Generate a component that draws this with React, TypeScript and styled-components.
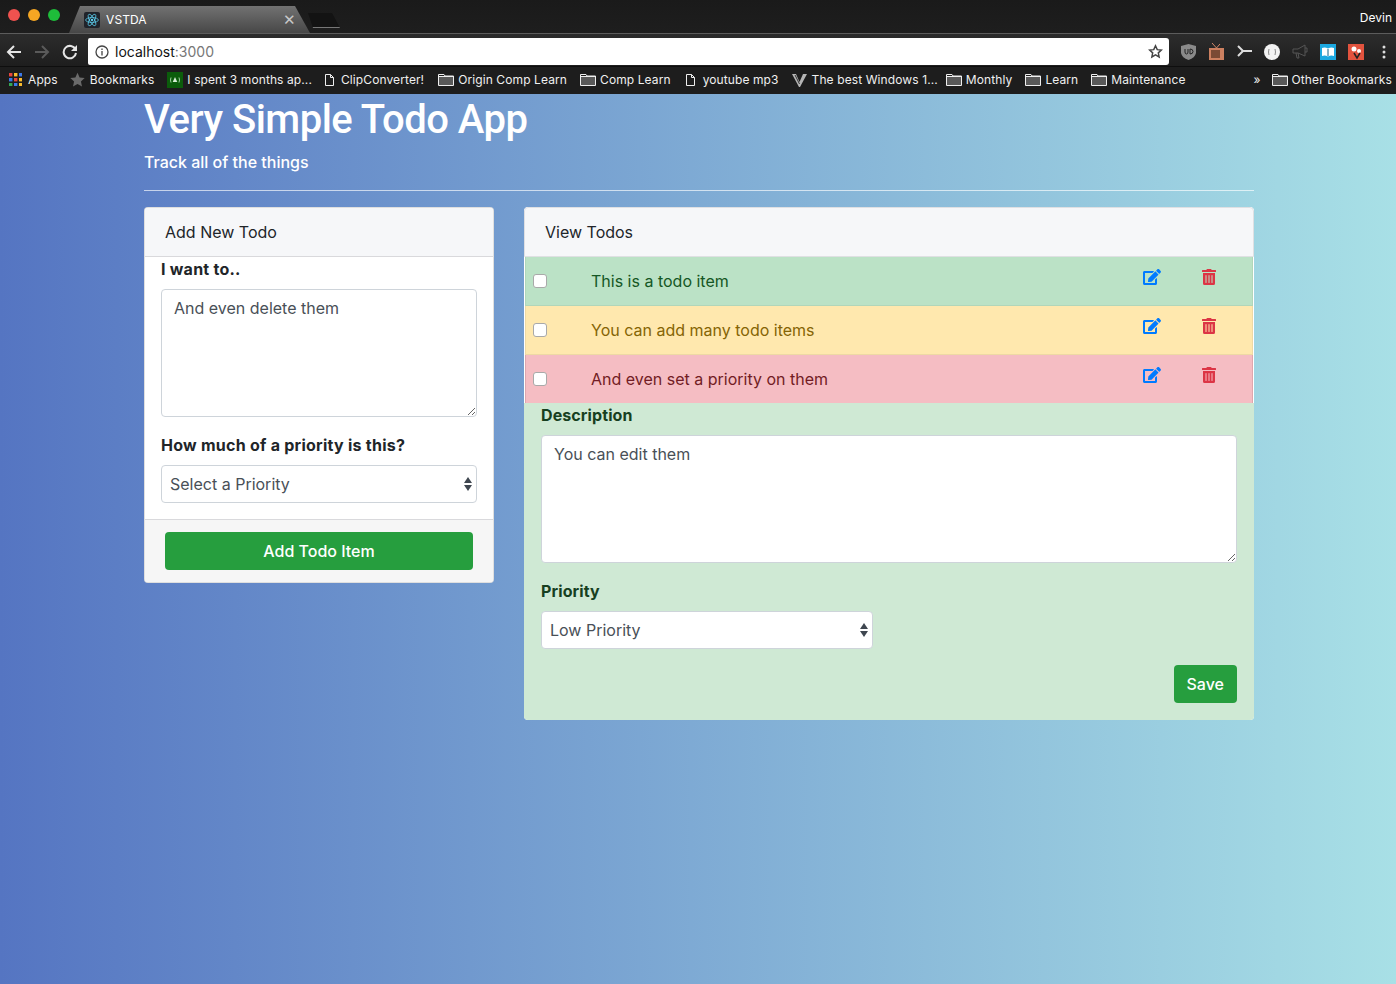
import React from 'react';
import styled, { createGlobalStyle } from 'styled-components';
import { FaEdit, FaTrashAlt } from 'react-icons/fa';

const GlobalStyle = createGlobalStyle`
  html, body {
    margin: 0;
    padding: 0;
  }
  body {
    font-family: Inter, "Open Sans", sans-serif;
    background: #5575c2;
  }
  * {
    box-sizing: border-box;
  }
`;

const Page = styled.div`
  width: 1396px;
  height: 984px;
  overflow: hidden;
  display: flex;
  flex-direction: column;
`;

/* browser chrome */
const Browser = styled.header`
  height: 94px;
  flex: none;
  display: flex;
  flex-direction: column;
  color: #fff;
  background: #1c1c1c;
`;

const TabStrip = styled.div`
  height: 34px;
  flex: none;
  display: flex;
  padding-top: 6px;
  align-items: flex-start;
  background: linear-gradient(#1a1a1a, #1e1e1e);
  border-bottom: 1px solid #5c5c5c;
`;

const Lights = styled.div`
  width: 69px;
  height: 22px;
  padding: 3px 0 0 8px;
  display: flex;
  gap: 8px;
  flex: none;
`;

const Light = styled.span<{ $color: string }>`
  width: 12px;
  height: 12px;
  border-radius: 50%;
  background: ${p => p.$color};
`;

const Tab = styled.div`
  width: 241px;
  height: 27px;
  flex: none;
  display: flex;
  align-items: center;
  padding: 0 14px 0 15px;
  background: linear-gradient(#727272, #474747);
  clip-path: polygon(0 100%, 11px 0, 226px 0, 241px 100%);
  font-size: 12px;
  letter-spacing: 0.1px;
`;

const TabIcon = styled.span`
  width: 16px;
  height: 16px;
  background: #20232a;
  border-radius: 2px;
  margin-right: 6px;
  display: flex;
  align-items: center;
  justify-content: center;
`;

const TabTitle = styled.span`
  flex: 1;
`;

const TabClose = styled.span`
  color: #c8c8c8;
  font-size: 15px;
  line-height: 1;
`;

const NewTab = styled.div`
  width: 32px;
  height: 15px;
  flex: none;
  margin: 7px 0 0 -2px;
  background: #131313;
  clip-path: polygon(0 0, 24px 0, 32px 100%, 5px 100%);
  border-bottom: 1px solid #777;
`;

const UserName = styled.span`
  margin: 4px 4px 0 auto;
  font-size: 12px;
`;

const Toolbar = styled.div`
  height: 32px;
  flex: none;
  display: flex;
  align-items: center;
  background: linear-gradient(#2c2c2c, #1e1e1e);
  padding: 4px 0 1px;
`;

const NavButton = styled.span`
  width: 28px;
  height: 24px;
  flex: none;
  display: flex;
  align-items: center;
  justify-content: center;
`;

const Omnibox = styled.div`
  width: 1081px;
  height: 27px;
  margin: 0 5px 0 4px;
  flex: none;
  background: #fff;
  border-radius: 2px 3px 3px 2px;
  display: flex;
  align-items: center;
  padding: 0 6px 0 7px;
  color: #111;
  font-size: 14px;
`;

const Url = styled.span`
  margin-left: 6px;
  flex: 1;
`;

const Port = styled.span`
  color: #777;
`;

const Extensions = styled.div`
  display: flex;
  align-items: center;
`;

const Extension = styled.span`
  width: 28px;
  height: 20px;
  flex: none;
  display: flex;
  align-items: center;
  justify-content: center;
`;

const BookmarkBar = styled.div`
  height: 28px;
  flex: none;
  padding: 0 0 2px 9px;
  display: flex;
  align-items: center;
  background: #1d1d1d;
  border-top: 1px solid #0e0e0e;
  font-size: 12px;
  white-space: nowrap;
  color: #f0f0f0;
`;

const Bookmark = styled.span<{ $gap?: number; $iconGap?: number }>`
  display: flex;
  align-items: center;
  flex: none;
  gap: ${p => p.$iconGap ?? 4}px;
  margin-left: ${p => p.$gap ?? 0}px;
`;

const BookmarkLabel = styled.span`
  letter-spacing: 0.1px;
`;

/* app */
const Main = styled.main`
  flex: 1;
  background: linear-gradient(90deg, #5575c2 0%, #a8e0e6 100%);
  color: #212529;
`;

const Container = styled.div`
  width: 1140px;
  margin: 0 0 0 129px;
  padding: 0 15px;
`;

const Title = styled.h1`
  margin: 0;
  padding-top: 2px;
  font-family: Roboto, Inter, sans-serif;
  font-size: 40px;
  line-height: 48px;
  font-weight: 500;
  letter-spacing: -0.5px;
  color: #fff;
`;

const Subtitle = styled.p`
  margin: 6px 0 0;
  font-size: 16px;
  line-height: 24px;
  font-weight: 500;
  color: #fff;
`;

const Rule = styled.hr`
  margin: 16px 0;
  height: 1px;
  border: 0;
  background: rgba(255, 255, 255, 0.65);
`;

const Columns = styled.div`
  display: flex;
  gap: 30px;
  align-items: flex-start;
`;

const Card = styled.section`
  width: 350px;
  flex: none;
  background: #fff;
  border: 1px solid rgba(0, 0, 0, 0.125);
  border-radius: 4px;
  overflow: hidden;
`;

const ViewCard = styled(Card)`
  width: 730px;
  border: 0;
`;

const CardHeader = styled.div`
  height: 49px;
  padding: 12px 20px;
  font-size: 16px;
  line-height: 24px;
  background: #f6f7f9;
  border-bottom: 1px solid #d9d9dc;
`;

const ViewHeader = styled(CardHeader)`
  height: 50px;
  border: 1px solid #dfe0e3;
  border-radius: 4px 4px 0 0;
`;

const CardBody = styled.div`
  padding: 0 16px 16px;
`;

const Label = styled.label<{ $top?: number }>`
  display: block;
  margin: ${p => p.$top ?? 0}px 0 8px;
  font-size: 16px;
  line-height: 24px;
  font-weight: 700;
  letter-spacing: 0.25px;
`;

const TextArea = styled.textarea`
  display: block;
  width: 100%;
  height: 128px;
  padding: 6px 12px;
  font: 400 16px/24px Inter, sans-serif;
  color: #495057;
  background: #fff;
  border: 1px solid #ced4da;
  border-radius: 4px;
  outline: none;
`;

const SelectWrap = styled.div<{ $width?: number }>`
  position: relative;
  width: ${p => (p.$width ? `${p.$width}px` : '100%')};

  &:before,
  &:after {
    content: '';
    position: absolute;
    right: 5px;
    border-left: 4px solid transparent;
    border-right: 4px solid transparent;
    pointer-events: none;
  }

  &:before {
    top: 12px;
    border-bottom: 6px solid #3f4650;
  }

  &:after {
    top: 20px;
    border-top: 6px solid #3f4650;
  }
`;

const Select = styled.select`
  display: block;
  width: 100%;
  height: 38px;
  padding: 0 8px;
  appearance: none;
  font: 400 16px Inter, sans-serif;
  color: #495057;
  background: #fff;
  border: 1px solid #ced4da;
  border-radius: 4px;
  outline: none;
`;

const CardFooter = styled.div`
  height: 63px;
  padding: 12px 20px;
  background: #f6f6f6;
  border-top: 1px solid #d9d9dc;
`;

const Button = styled.button<{ $block?: boolean }>`
  display: block;
  width: ${p => (p.$block ? '100%' : 'auto')};
  height: 38px;
  padding: 0 13px;
  font: 500 16px Inter, sans-serif;
  color: #fff;
  background: #269e3e;
  border: 0;
  border-radius: 4px;
`;

const TodoItem = styled.div<{ $bg: string; $color: string; $border: string }>`
  height: 49px;
  margin: 0 1px;
  display: flex;
  align-items: center;
  font-size: 16px;
  color: ${p => p.$color};
  background: ${p => p.$bg};
  border: 1px solid ${p => p.$border};
  border-top: 0;
`;

const Check = styled.input`
  width: 14px;
  height: 14px;
  margin: 0 44px 0 7px;
  flex: none;
  appearance: none;
  background: #fff;
  border: 1px solid #a9a9a9;
  border-radius: 3px;
`;

const TodoText = styled.span`
  flex: 1;
`;

const IconSlot = styled.span<{ $width: number; $color: string }>`
  width: ${p => p.$width}px;
  flex: none;
  display: flex;
  margin-top: -9px;
  color: ${p => p.$color};
`;

const Detail = styled.div`
  height: 317px;
  padding: 0 17px;
  background: #cfe9d4;
  color: #155724;
`;

const DetailLabel = styled(Label)`
  color: #17401f;
  letter-spacing: 0.1px;
`;

const SaveRow = styled.div`
  display: flex;
  justify-content: flex-end;
  margin-top: 16px;
`;

const ReactLogo = () => (
  <svg width="14" height="14" viewBox="-12 -12 24 24" fill="none" stroke="#61dafb" strokeWidth="1.2">
    <circle r="2" fill="#61dafb" stroke="none" />
    <ellipse rx="11" ry="4.2" />
    <ellipse rx="11" ry="4.2" transform="rotate(60)" />
    <ellipse rx="11" ry="4.2" transform="rotate(120)" />
  </svg>
);

const BackArrow = ({ color }: { color: string }) => (
  <svg width="16" height="14" viewBox="0 0 16 14" fill="none" stroke={color} strokeWidth="2">
    <path d="M15 7H2M8 1L2 7l6 6" />
  </svg>
);

const ForwardArrow = ({ color }: { color: string }) => (
  <svg width="16" height="14" viewBox="0 0 16 14" fill="none" stroke={color} strokeWidth="2">
    <path d="M1 7h13M8 1l6 6-6 6" />
  </svg>
);

const Reload = () => (
  <svg width="16" height="16" viewBox="0 0 16 16" fill="none" stroke="#e6e6e6" strokeWidth="2">
    <path d="M13.5 5.5A6.2 6.2 0 1 0 14 9" />
    <path d="M15 1v6H9z" fill="#e6e6e6" stroke="none" />
  </svg>
);

const InfoIcon = () => (
  <svg width="14" height="14" viewBox="0 0 14 14" fill="none" stroke="#444" strokeWidth="1.3">
    <circle cx="7" cy="7" r="6" />
    <path d="M7 6v4.5M7 3.4v1.5" />
  </svg>
);

const StarOutline = () => (
  <svg width="15" height="15" viewBox="0 0 24 24" fill="none" stroke="#444" strokeWidth="2.4">
    <path d="M12 3l2.8 6 6.5.8-4.8 4.4 1.3 6.5L12 17.4l-5.8 3.3 1.3-6.5L2.7 9.8l6.5-.8z" />
  </svg>
);

const AppsGrid = () => {
  const colors = ['#e8453c', '#f9bb2d', '#3b78e7', '#3b78e7', '#e8453c', '#f9bb2d', '#34a853', '#3b78e7', '#f9bb2d'];
  return (
    <svg width="13" height="13" viewBox="0 0 13 13">
      {colors.map((c, i) => (
        <rect key={i} x={(i % 3) * 5} y={Math.floor(i / 3) * 5} width="3.4" height="3.4" fill={c} />
      ))}
    </svg>
  );
};

const GreyStar = () => (
  <svg width="15" height="15" viewBox="0 0 24 24" fill="#6a6a6a">
    <path d="M12 1l3.4 7.6 8.1.9-6 5.5 1.7 8L12 19l-7.200 4 1.700-8-6-5.500 8.100-.9z" />
  </svg>
);

const GreenSite = () => (
  <svg width="16" height="16" viewBox="0 0 16 16">
    <rect width="16" height="16" fill="#0b5c0b" />
    <path d="M4 5.500Q3 8 4 10.500M12 5.500Q13 8 12 10.500" fill="none" stroke="#9fd29f" />
    <path d="M8 5l2.300 5H5.700z" fill="#d5efd5" />
  </svg>
);

const DocIcon = () => (
  <svg width="9" height="12" viewBox="0 0 9 12" fill="none" stroke="#eee">
    <path d="M.5.5h5l3 3v8h-8zM5.500.5v3h3" />
  </svg>
);

const FolderIcon = () => (
  <svg width="16" height="13" viewBox="0 0 16 13" fill="none" stroke="#eee">
    <path d="M1 4h14v8H1z" fill="#8a8a8a" stroke="none" opacity=".55" />
    <path d="M.5 12.500V1.500h5.500l1 1.500h8.500v9.500z" />
    <path d="M.5 3.500h15" />
  </svg>
);

const VIcon = () => (
  <svg width="15" height="14" viewBox="0 0 15 14">
    <path d="M0 1h4l3.500 8L11 1h4L8 14H7z" fill="#b5b5b5" />
    <path d="M3 2l4.500 9" stroke="#333" fill="none" />
  </svg>
);

const folders = (name: string, gap: number) => (
  <Bookmark $gap={gap}>
    <FolderIcon />
    <BookmarkLabel>{name}</BookmarkLabel>
  </Bookmark>
);

const todos = [
  { text: 'This is a todo item', bg: '#bbe2c6', color: '#155724', border: '#b1d6ba' },
  { text: 'You can add many todo items', bg: '#ffe8ae', color: '#856404', border: '#eed9a4' },
  { text: 'And even set a priority on them', bg: '#f5bdc3', color: '#721c24', border: '#dfa7ae' },
];

export default function App() {
  return (
    <Page>
      <GlobalStyle />
      <Browser>
        <TabStrip>
          <Lights>
            <Light $color="#f0524f" />
            <Light $color="#f5a623" />
            <Light $color="#1ebd3a" />
          </Lights>
          <Tab>
            <TabIcon>
              <ReactLogo />
            </TabIcon>
            <TabTitle>VSTDA</TabTitle>
            <TabClose>✕</TabClose>
          </Tab>
          <NewTab />
          <UserName>Devin</UserName>
        </TabStrip>
        <Toolbar>
          <NavButton>
            <BackArrow color="#e6e6e6" />
          </NavButton>
          <NavButton>
            <ForwardArrow color="#5a5a5a" />
          </NavButton>
          <NavButton>
            <Reload />
          </NavButton>
          <Omnibox>
            <InfoIcon />
            <Url>
              localhost<Port>:3000</Port>
            </Url>
            <StarOutline />
          </Omnibox>
          <Extensions>
            <Extension>
              <svg width="15" height="16" viewBox="0 0 15 16">
                <path d="M0 2l7.500-2L15 2v7q-1 5-7.500 7Q1 14 0 9z" fill="#8a8a8a" />
                <path d="M4 5v3q0 2 1.500 2T7 8V5M9 5v5q3 0 3-2.500T9 5z" fill="none" stroke="#222" />
              </svg>
            </Extension>
            <Extension>
              <svg width="15" height="17" viewBox="0 0 15 17">
                <path d="M3 0l4.500 5L11 1" fill="none" stroke="#d5896a" />
                <rect y="5" width="15" height="12" fill="#cc8060" />
                <rect x="2" y="7" width="9" height="8" fill="#7a4a35" />
              </svg>
            </Extension>
            <Extension>
              <svg width="15" height="13" viewBox="0 0 15 13" fill="none" stroke="#ddd" strokeWidth="2">
                <path d="M1 1l5 5H15M6 6l-5 5" />
              </svg>
            </Extension>
            <Extension>
              <svg width="16" height="16" viewBox="0 0 16 16">
                <circle cx="8" cy="8" r="8" fill="#f2f2f2" />
                <path d="M5 5Q4 8 5 11M11 5Q12 8 11 11" stroke="#888" fill="none" />
              </svg>
            </Extension>
            <Extension>
              <svg width="16" height="15" viewBox="0 0 16 15" fill="none" stroke="#555">
                <path d="M1 5h5l7-4v11L6 9H1zM4 9l1 5h2l-1-5M13 4h2v4h-2" />
              </svg>
            </Extension>
            <Extension>
              <svg width="16" height="16" viewBox="0 0 16 16">
                <rect width="16" height="16" fill="#1ba8e0" />
                <path d="M2 4q3-1 6 .5Q11 3 14 4v8q-3-1-6 .5Q5 11 2 12z" fill="#fff" />
                <path d="M8 5v7" stroke="#0b5f85" />
              </svg>
            </Extension>
            <Extension>
              <svg width="16" height="16" viewBox="0 0 16 16">
                <rect width="16" height="16" fill="#e2533e" />
                <circle cx="6" cy="5" r="2.500" fill="#fff" />
                <circle cx="11" cy="7" r="2" fill="#fff" />
                <path d="M6 9l3 5 3-5" stroke="#222" fill="none" strokeWidth="1.500" />
              </svg>
            </Extension>
            <Extension>
              <svg width="4" height="14" viewBox="0 0 4 14" fill="#ddd">
                <circle cx="2" cy="2" r="1.500" />
                <circle cx="2" cy="7" r="1.500" />
                <circle cx="2" cy="12" r="1.500" />
              </svg>
            </Extension>
          </Extensions>
        </Toolbar>
        <BookmarkBar>
          <Bookmark $iconGap={6}>
            <AppsGrid />
            <BookmarkLabel>Apps</BookmarkLabel>
          </Bookmark>
          <Bookmark $gap={12} $iconGap={5}>
            <GreyStar />
            <BookmarkLabel>Bookmarks</BookmarkLabel>
          </Bookmark>
          <Bookmark $gap={13}>
            <GreenSite />
            <BookmarkLabel>I spent 3 months ap...</BookmarkLabel>
          </Bookmark>
          <Bookmark $gap={13} $iconGap={7}>
            <DocIcon />
            <BookmarkLabel>ClipConverter!</BookmarkLabel>
          </Bookmark>
          {folders('Origin Comp Learn', 14)}
          {folders('Comp Learn', 13)}
          <Bookmark $gap={15} $iconGap={8}>
            <DocIcon />
            <BookmarkLabel>youtube mp3</BookmarkLabel>
          </Bookmark>
          <Bookmark $gap={13} $iconGap={5}>
            <VIcon />
            <BookmarkLabel>The best Windows 1...</BookmarkLabel>
          </Bookmark>
          {folders('Monthly', 8)}
          {folders('Learn', 13)}
          {folders('Maintenance', 13)}
          <Bookmark $gap={68}>»</Bookmark>
          {folders('Other Bookmarks', 11)}
        </BookmarkBar>
      </Browser>
      <Main>
        <Container>
          <Title>Very Simple Todo App</Title>
          <Subtitle>Track all of the things</Subtitle>
          <Rule />
          <Columns>
            <Card>
              <CardHeader>Add New Todo</CardHeader>
              <CardBody>
                <Label>I want to..</Label>
                <TextArea defaultValue="And even delete them" />
                <Label $top={16}>How much of a priority is this?</Label>
                <SelectWrap>
                  <Select defaultValue="">
                    <option value="">Select a Priority</option>
                  </Select>
                </SelectWrap>
              </CardBody>
              <CardFooter>
                <Button $block>Add Todo Item</Button>
              </CardFooter>
            </Card>
            <ViewCard>
              <ViewHeader>View Todos</ViewHeader>
              {todos.map(t => (
                <TodoItem key={t.text} $bg={t.bg} $color={t.color} $border={t.border}>
                  <Check type="checkbox" />
                  <TodoText>{t.text}</TodoText>
                  <IconSlot $width={58} $color="#007bff">
                    <FaEdit size={18} />
                  </IconSlot>
                  <IconSlot $width={51} $color="#dc3545">
                    <FaTrashAlt size={16} />
                  </IconSlot>
                </TodoItem>
              ))}
              <Detail>
                <DetailLabel $top={-1}>Description</DetailLabel>
                <TextArea defaultValue="You can edit them" />
                <DetailLabel $top={16}>Priority</DetailLabel>
                <SelectWrap $width={332}>
                  <Select defaultValue="low">
                    <option value="low">Low Priority</option>
                  </Select>
                </SelectWrap>
                <SaveRow>
                  <Button>Save</Button>
                </SaveRow>
              </Detail>
            </ViewCard>
          </Columns>
        </Container>
      </Main>
    </Page>
  );
}
